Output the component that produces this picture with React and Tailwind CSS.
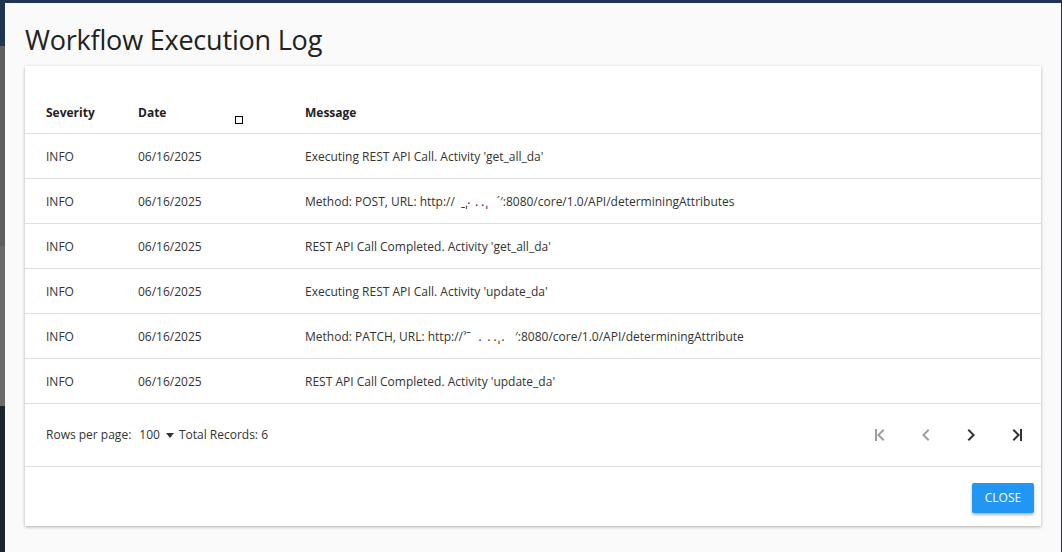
import React from "react";

const rows = [
  ["INFO", "06/16/2025", "Executing REST API Call. Activity 'get_all_da'"],
  ["INFO", "06/16/2025", "Method: POST, URL: http://\u2002\u02cd\u02cc\u2027 \u2024\u2024\u02cc \u2002\u00b4\u2032:8080/core/1.0/API/determiningAttributes"],
  ["INFO", "06/16/2025", "REST API Call Completed. Activity 'get_all_da'"],
  ["INFO", "06/16/2025", "Executing REST API Call. Activity 'update_da'"],
  ["INFO", "06/16/2025", "Method: PATCH, URL: http://\u02c0\u02c9\u2002\u2024 \u2024\u2024\u02cc\u2024 \u2002\u2032:8080/core/1.0/API/determiningAttribute"],
  ["INFO", "06/16/2025", "REST API Call Completed. Activity 'update_da'"],
];

function Chevron({ dir, bar, color }) {
  return (
    <svg width="24" height="24" viewBox="0 0 24 24" fill={color}>
      {dir === "left" ? (
        <path d="M15.41 7.41 14 6l-6 6 6 6 1.41-1.41L10.83 12z" />
      ) : (
        <path d="M8.59 16.59 10 18l6-6-6-6-1.41 1.41L13.17 12z" />
      )}
      {bar === "left" && <path d="M6 6h2v12H6z" />}
      {bar === "right" && <path d="M16 6h2v12h-2z" />}
    </svg>
  );
}

export default function App() {
  return (
    <div
      className="w-[1062px] h-[552px] flex bg-[#1f3550] overflow-hidden"
      style={{ fontFamily: "'Open Sans', 'Noto Sans', sans-serif" }}
    >
      <div className="w-[5px] flex flex-col">
        <div className="h-[46px] bg-[#1f3550]" />
        <div className="h-[200px] bg-[#5f5f5f]" />
        <div className="h-[160px] bg-[#6a6a6a]" />
        <div className="flex-1 bg-[#1c262c]" />
      </div>
      <div className="flex-1 mt-[3px] mr-[1px] bg-[#fafafa] flex flex-col">
        <h1 className="pl-[20px] pt-[19px] h-[63px] text-[27px] leading-[36px] text-[#222] tracking-[-0.2px]">
          Workflow Execution Log
        </h1>
        <div className="ml-[20px] mr-[20px] bg-white shadow-[0_1px_3px_rgba(0,0,0,0.3)] flex flex-col text-[12px] text-[#333]">
          <div className="h-[68px] flex items-end border-b border-[#e0e0e0] font-bold text-[#222] relative">
            <div className="flex h-[41px] items-center w-full">
              <div className="w-[113px] pl-[21px]">Severity</div>
              <div className="w-[167px]">Date</div>
              <div>Message</div>
            </div>
            <div className="absolute left-[210px] top-[50px] w-[8px] h-[8px] border border-black" />
          </div>
          {rows.map((r, i) => (
            <div key={i} className="h-[45px] pt-[2px] flex items-center border-b border-[#e0e0e0]">
              <div className="w-[113px] pl-[21px]">{r[0]}</div>
              <div className="w-[167px]">{r[1]}</div>
              <div className="whitespace-pre">{r[2]}</div>
            </div>
          ))}
          <div className="h-[63px] flex items-center border-b border-[#e0e0e0] pl-[21px] pr-[13px]">
            <span>Rows per page:</span>
            <span className="ml-[8px]">100</span>
            <span className="ml-[6px] w-0 h-0 border-l-[4px] border-r-[4px] border-t-[5px] border-l-transparent border-r-transparent border-t-[#333]" />
            <span className="ml-[5px]">Total Records: 6</span>
            <div className="ml-auto flex gap-[21px]">
              <Chevron dir="left" bar="left" color="#9e9e9e" />
              <Chevron dir="left" color="#9e9e9e" />
              <Chevron dir="right" color="#333" />
              <Chevron dir="right" bar="right" color="#333" />
            </div>
          </div>
          <div className="h-[59px] flex items-center justify-end pr-[7px]">
            <button className="h-[30px] w-[62px] bg-[#2196f3] text-white text-[12px] rounded-[2px] shadow-[0_2px_3px_rgba(0,0,0,0.3)] mt-[2px]">
              CLOSE
            </button>
          </div>
        </div>
      </div>
    </div>
  );
}
